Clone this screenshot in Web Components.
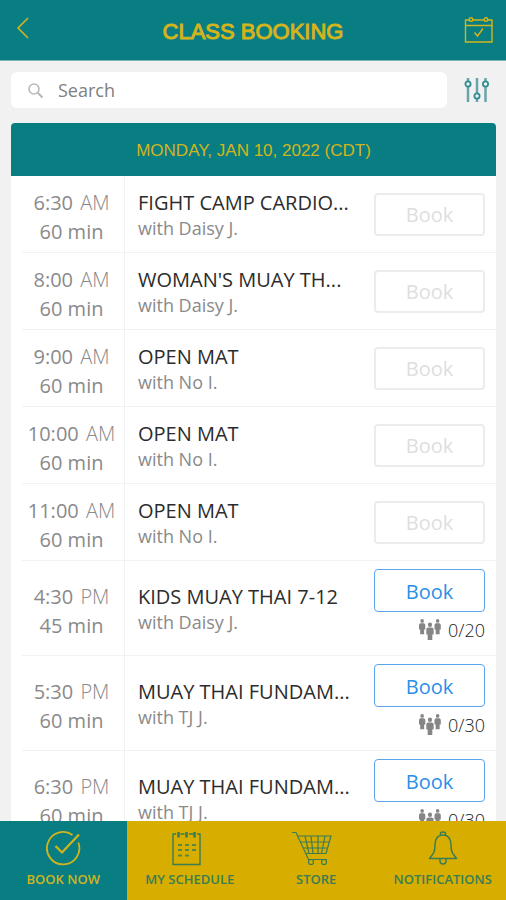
<!DOCTYPE html>
<html lang="en">
<head>
<meta charset="utf-8">
<meta name="viewport" content="width=device-width, initial-scale=1">
<title>Class Booking</title>
<style>
  :root {
    --teal: #087e83;
    --gold: #d7ad00;
    --gold-text: #d3b41c;
    --page: #f1f1f2;
    --line: #eff3f4;
    --blue: #2a8fe8;
  }

  body {
    margin: 0;
    background: var(--page);
    font-family: "Open Sans", "Noto Sans", sans-serif;
  }
</style>
</head>
<body>
<booking-app></booking-app>

<script>
/**
 * Top bar with back button, title and calendar shortcut
 */
class AppBar extends HTMLElement {
  constructor() {
    super();
    this.attachShadow({ mode: 'open' });
  }

  connectedCallback() {
    this.shadowRoot.innerHTML = `
      <style>
        :host {
          display: flex;
          align-items: center;
          justify-content: space-between;
          height: 60px;
          padding: 0 12px;
          background: var(--teal);
          border-bottom: 1px solid #7fb4b7;
          color: var(--gold-text);
        }

        h1 {
          margin: 0;
          padding-top: 3px;
          font: 400 22px/32px "Liberation Sans", Arial, sans-serif;
          -webkit-text-stroke: 1px currentColor;
        }

        button {
          display: flex;
          padding: 0;
          border: 0;
          background: none;
          color: inherit;
        }

        svg {
          fill: none;
          stroke: currentColor;
        }
      </style>

      <button type="button" aria-label="Back">
        <svg width="32" height="26" viewBox="0 0 32 26" stroke-width="1.6"><path d="M16 1 6 11 16 21"/></svg>
      </button>
      <h1><slot></slot></h1>
      <button type="button" aria-label="My calendar">
        <svg width="32" height="30" viewBox="0 0 32 30" stroke-width="1.4">
          <path d="M7 5H3.500V27H30V5H26M11 5H22M3.500 10.500H30"/>
          <circle cx="9" cy="4.500" r="1.800"/>
          <circle cx="24" cy="4.500" r="1.800"/>
          <path d="M12.500 17.500 15.500 21 21 13.500"/>
        </svg>
      </button>
    `;
  }
}

/**
 * Search field with filter button
 */
class SearchBar extends HTMLElement {
  constructor() {
    super();
    this.attachShadow({ mode: 'open' });
  }

  connectedCallback() {
    this.shadowRoot.innerHTML = `
      <style>
        :host {
          display: flex;
          align-items: center;
          gap: 16px;
          padding: 11px 16px 15px 11px;
        }

        label {
          flex: 1;
          display: flex;
          align-items: center;
          gap: 14px;
          height: 36px;
          padding-left: 16px;
          border-radius: 6px;
          background: #fff;
        }

        input {
          flex: 1;
          min-width: 0;
          padding: 0;
          border: 0;
          outline: 0;
          background: none;
          font: 400 18px/24px "Open Sans", sans-serif;
          color: #666;
        }

        input::placeholder {
          color: #808080;
          opacity: 1;
        }

        button {
          display: flex;
          padding: 0;
          border: 0;
          background: none;
        }
      </style>

      <label>
        <svg width="17" height="17" viewBox="0 0 17 17" fill="none" stroke="#b9b9b9" stroke-width="1.600">
          <circle cx="7" cy="7" r="5"/>
          <path d="M11 11 15.500 15.500" stroke-width="2.200"/>
        </svg>
        <input type="text" placeholder="Search" aria-label="Search">
      </label>
      <button type="button" aria-label="Filter">
        <svg width="27" height="26" viewBox="0 0 27 26" fill="none" stroke="#328d93" stroke-width="1.800">
          <path d="M5 1V4.500M5 10V25M14 1V16M14 21.500V25M22.500 1V4.500M22.500 10V25" stroke="#6aa3a8" stroke-width="2.500"/>
          <circle cx="5" cy="7" r="2.600"/>
          <circle cx="14" cy="19" r="2.600"/>
          <circle cx="22.500" cy="7" r="2.600"/>
        </svg>
      </button>
    `;
  }
}

/**
 * One class: time, name, trainer and book button
 */
class ClassRow extends HTMLElement {
  constructor() {
    super();
    this.attachShadow({ mode: 'open' });
  }

  connectedCallback() {
    const spots = this.getAttribute('spots');
    this.shadowRoot.innerHTML = `
      <style>
        :host {
          display: block;
          padding-left: 11px;
        }

        article {
          display: flex;
          height: 76px;
          border-bottom: 1px solid var(--line);
        }

        article.open {
          height: 94px;
        }

        .time {
          display: flex;
          flex-direction: column;
          justify-content: center;
          width: 103px;
          padding-top: 6px;
          padding-right: 3px;
          box-sizing: border-box;
          border-right: 1px solid var(--line);
          text-align: center;
          font-size: 20px;
          line-height: 29px;
          color: #8a8a8a;
        }

        .half {
          margin-left: 2px;
          font-weight: 300;
        }

        .info {
          flex: 1;
          min-width: 0;
          display: flex;
          flex-direction: column;
          justify-content: center;
          padding-top: 2px;
          padding-left: 13px;
        }

        h3 {
          margin: 0;
          font-size: 20px;
          line-height: 26px;
          font-weight: 400;
          color: #2c2c2c;
          white-space: nowrap;
        }

        p {
          margin: 0;
          font-size: 18px;
          line-height: 24px;
          color: #8a8a8a;
        }

        .action {
          display: flex;
          flex-direction: column;
          justify-content: center;
          width: 111px;
          padding-right: 11px;
        }

        .open .action {
          justify-content: flex-start;
          padding-top: 8px;
        }

        button {
          height: 43px;
          padding: 2px 0 0;
          border: 1px solid #5aa5ee;
          border-radius: 4px;
          background: #fff;
          font: 400 20px/28px "Open Sans", sans-serif;
          color: var(--blue);
        }

        button:disabled {
          border: 2px solid #ececec;
          color: #dedede;
        }

        .spots {
          display: flex;
          align-items: center;
          justify-content: flex-end;
          gap: 6px;
          padding-top: 5px;
          font-size: 18px;
          font-weight: 300;
          line-height: 26px;
          color: #222;
        }
      </style>

      <article class="${spots ? 'open' : ''}">
        <div class="time">
          <div>${this.getAttribute('time')} <span class="half">${this.getAttribute('half')}</span></div>
          <div>${this.getAttribute('length')} min</div>
        </div>
        <div class="info">
          <h3>${this.getAttribute('name')}</h3>
          <p>with ${this.getAttribute('trainer')}</p>
        </div>
        <div class="action">
          <button type="button" ${spots ? '' : 'disabled'}>Book</button>
          ${spots ? this.renderSpots(spots) : ''}
        </div>
      </article>
    `;
  }

  /**
   * Group icon and number of booked spots
   * @param {string} spots - Booked and total, e.g. "0/20"
   */
  renderSpots(spots) {
    const person = '<circle cx="3.500" cy="2" r="2"/><path d="M1.500 4.500H5.500Q7 5 7 6.500V11H5.700V16H1.300V11H0V6.500Q0 5 1.500 4.500Z"/>';
    return `
      <div class="spots">
        <svg width="23" height="22" viewBox="0 0 23 22" fill="#858585">
          <g transform="translate(0 0) scale(.9 .95)">${person}</g>
          <g transform="translate(15.500 0) scale(.9 .95)">${person}</g>
          <g transform="translate(7.300 3.500) scale(1.050 1.100)">${person}</g>
        </svg>
        <span>${spots}</span>
      </div>
    `;
  }
}

/**
 * One entry of the bottom navigation, icon in the "icon" slot
 */
class TabItem extends HTMLElement {
  constructor() {
    super();
    this.attachShadow({ mode: 'open' });
  }

  connectedCallback() {
    this.shadowRoot.innerHTML = `
      <style>
        :host {
          display: block;
          flex: 1 1 0;
          min-width: 0;
          color: #3a7d55;
        }

        :host([active]) {
          background: var(--teal);
          color: var(--gold-text);
        }

        a {
          display: flex;
          flex-direction: column;
          align-items: center;
          gap: 2px;
          padding: 9px 0 11px;
          color: inherit;
          text-decoration: none;
          font-size: 13px;
          font-weight: 600;
          line-height: 20px;
          white-space: nowrap;
        }
      </style>

      <a href="#${this.id}" ${this.hasAttribute('active') ? 'aria-current="page"' : ''}>
        <slot name="icon"></slot>
        <span><slot></slot></span>
      </a>
    `;
  }
}

/**
 * Booking screen
 */
class BookingApp extends HTMLElement {
  constructor() {
    super();
    this.attachShadow({ mode: 'open' });
    this.classes = [
      ['6:30', 'AM', 60, 'FIGHT CAMP CARDIO...', 'Daisy J.'],
      ['8:00', 'AM', 60, "WOMAN'S MUAY TH...", 'Daisy J.'],
      ['9:00', 'AM', 60, 'OPEN MAT', 'No I.'],
      ['10:00', 'AM', 60, 'OPEN MAT', 'No I.'],
      ['11:00', 'AM', 60, 'OPEN MAT', 'No I.'],
      ['4:30', 'PM', 45, 'KIDS MUAY THAI 7-12', 'Daisy J.', '0/20'],
      ['5:30', 'PM', 60, 'MUAY THAI FUNDAM...', 'TJ J.', '0/30'],
      ['6:30', 'PM', 60, 'MUAY THAI FUNDAM...', 'TJ J.', '0/30']
    ];
  }

  connectedCallback() {
    const rows = this.classes.map(([time, half, length, name, trainer, spots]) => `
      <class-row time="${time}" half="${half}" length="${length}" name="${name}"
        trainer="${trainer}" ${spots ? `spots="${spots}"` : ''}></class-row>
    `).join('');

    this.shadowRoot.innerHTML = `
      <style>
        :host {
          display: flex;
          flex-direction: column;
          height: 100vh;
        }

        main {
          flex: 1;
          min-height: 0;
          display: flex;
          flex-direction: column;
        }

        section {
          flex: 1;
          min-height: 0;
          overflow: hidden;
          margin: 0 10px 0 11px;
          border-radius: 4px 4px 0 0;
          background: #fff;
        }

        h2 {
          margin: 0;
          padding: 16px 0 13px;
          background: var(--teal);
          color: var(--gold-text);
          text-align: center;
          font: 400 17px/24px "Liberation Sans", Arial, sans-serif;
        }

        nav {
          display: flex;
          background: var(--gold);
        }

        nav svg {
          fill: none;
          stroke: currentColor;
        }
      </style>

      <app-bar>CLASS BOOKING</app-bar>
      <main>
        <search-bar></search-bar>
        <section>
          <h2>MONDAY, JAN 10, 2022 (CDT)</h2>
          ${rows}
        </section>
      </main>
      <nav>
        <tab-item id="book" active>
          <svg slot="icon" width="36" height="37" viewBox="0 0 36 37" stroke-width="1.800">
            <path d="M27.500 5A16.200 16.200 0 1 0 33.300 12.500"/>
            <path d="M10.500 16 17 22.500 34 4.500" stroke-width="2.200"/>
          </svg>
          BOOK NOW
        </tab-item>
        <tab-item id="schedule">
          <svg slot="icon" width="36" height="37" viewBox="0 0 36 37" stroke-width="1.400">
            <path d="M4 4H1V34.500H28V4H25"/>
            <path d="M8.500 4H12.500M17 4H21"/>
            <path d="M6.500 2V7.500M14.500 2V7.500M22.500 2V7.500" stroke-width="2.600"/>
            <path d="M6 15H24M6 20H24M6 25.500H18" stroke-width="1.800" stroke-dasharray="4 3" opacity=".8"/>
          </svg>
          MY SCHEDULE
        </tab-item>
        <tab-item id="store">
          <svg slot="icon" width="48" height="37" viewBox="0 0 48 37" stroke-width="1.200">
            <path d="M0 2.500H4L16.500 29.500H35"/>
            <path d="M6 6H39L34 23.500H14M8.500 12H37M11 18H35.500"/>
            <path d="M13 6 17 23.500M19 6 21 23.500M26 6V23.500M33 6 29.500 23.500"/>
            <circle cx="19" cy="32" r="2.500"/>
            <circle cx="32" cy="32" r="2.500"/>
          </svg>
          STORE
        </tab-item>
        <tab-item id="notifications">
          <svg slot="icon" width="36" height="37" viewBox="0 0 36 37" stroke-width="1.500">
            <path d="M15.500 5V3.500Q15.500 2 18 2T20.500 3.500V5"/>
            <path d="M10 14.500Q10.500 5 18 5T26 14.500Q26 22 28.500 24.500L31.500 28.500H4.500L7.500 24.500Q10 22 10 14.500Z" stroke-linejoin="round"/>
            <path d="M15 29V31Q15 34 18 34T21 31V29"/>
          </svg>
          NOTIFICATIONS
        </tab-item>
      </nav>
    `;
  }
}

customElements.define('app-bar', AppBar);
customElements.define('search-bar', SearchBar);
customElements.define('class-row', ClassRow);
customElements.define('tab-item', TabItem);
customElements.define('booking-app', BookingApp);
</script>
</body>
</html>
